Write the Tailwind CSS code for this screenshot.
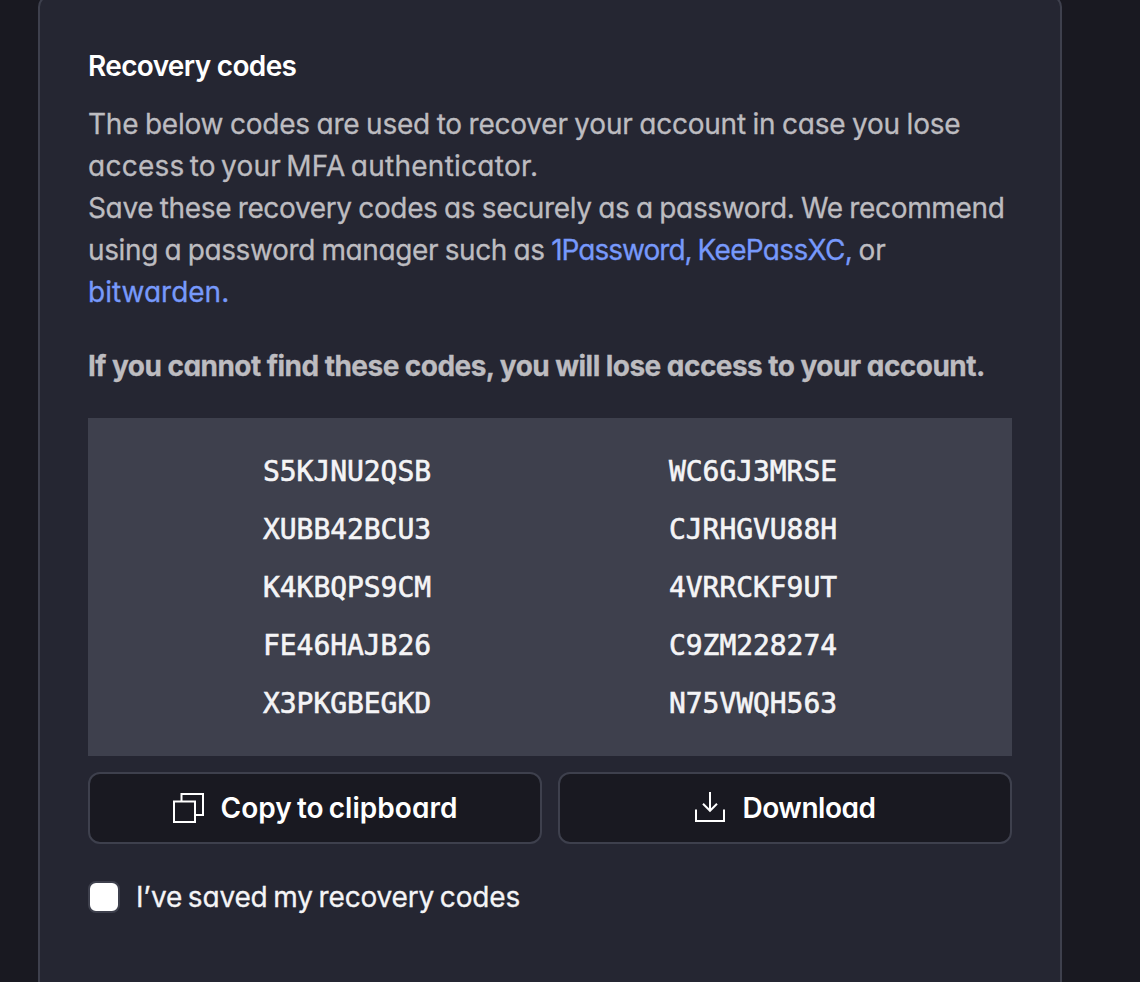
<!DOCTYPE html>
<html lang="en">
<head>
<meta charset="utf-8">
<title>Recovery codes</title>
<script src="https://cdn.jsdelivr.net/npm/@tailwindcss/browser@4"></script>
</head>
<body class="h-[982px] overflow-hidden bg-[#191921] px-[38px] font-['Inter',sans-serif] text-[28px] leading-[42px] text-white [font-feature-settings:'cv11']">
<main class="-mt-[5px] h-[987px] w-[1024px] rounded-t-[12px] border-2 border-b-0 border-[#3e404d] bg-[#252632] px-12 pt-12">
  <h1 class="whitespace-nowrap font-semibold tracking-[-0.67px]">Recovery codes</h1>
  <div class="mt-4 whitespace-nowrap text-[#bdbcc0] [-webkit-text-stroke:0.3px_currentColor] [word-spacing:-1px]">
    <p class="tracking-[-0.22px]">The below codes are used to recover your account in case you lose</p>
    <p class="tracking-[0.26px] [word-spacing:-3px]">access to your MFA authenticator.</p>
    <p class="tracking-[-0.35px]">Save these recovery codes as securely as a password. We recommend</p>
    <p class="tracking-[-0.38px]">using a password manager such as <a class="tracking-[-0.98px] text-[#7799fb]">1Password, <span class="tracking-[-0.7px]">KeePassXC,</span></a> <span class="tracking-normal">or</span></p>
    <p><a class="text-[#7799fb]">bitwarden.</a></p>
    <p class="mt-8 font-bold tracking-[-0.54px] [word-spacing:0px]">If you cannot find these codes, you will lose access to your account.</p>
  </div>
  <section class="mt-[31px] grid h-[338px] grid-cols-2 bg-[#3e404d] px-14 pt-[25px] pb-[23px] text-center font-['DejaVu_Sans_Mono',monospace] leading-[58px] tracking-[-0.06px] text-[#f4f4f6] [-webkit-text-stroke:0.6px_currentColor]">
    <span>S5KJNU2QSB</span><span>WC6GJ3MRSE</span>
    <span>XUBB42BCU3</span><span>CJRHGVU88H</span>
    <span>K4KBQPS9CM</span><span>4VRRCKF9UT</span>
    <span>FE46HAJB26</span><span>C9ZM228274</span>
    <span>X3PKGBEGKD</span><span>N75VWQH563</span>
  </section>
  <div class="mt-4 grid grid-cols-2 gap-4 font-semibold">
    <button class="flex h-[72px] items-center justify-center gap-4 rounded-[12px] border-2 border-[#3e404d] bg-[#191921]">
      <svg class="size-8" viewBox="1 0 32 32" fill="none" stroke="currentColor" stroke-width="2"><path d="M2 9.5h21V30H2zM9.5 9.5V2H31v21h-8"/></svg>
      <span class="tracking-[0.04px] [word-spacing:-2px]">Copy to clipboard</span>
    </button>
    <button class="flex h-[72px] items-center justify-center gap-4 rounded-[12px] border-2 border-[#3e404d] bg-[#191921]">
      <svg class="size-8" viewBox="0 0 32 32" fill="none" stroke="currentColor" stroke-width="2"><path d="M2 17.5V29h28V17.5M16 0v19M9 11.8l7 7 7-7"/></svg>
      <span class="tracking-[-0.45px]">Download</span>
    </button>
  </div>
  <label class="mt-8 flex items-center gap-4 text-[#f4f4f6]">
    <span class="size-8 rounded-[8px] border-2 border-[#3e404d] bg-white"></span>
    <span class="tracking-[-0.16px] [-webkit-text-stroke:0.3px_currentColor] [word-spacing:-2px]">I’ve saved my recovery codes</span>
  </label>
</main>
</body>
</html>
